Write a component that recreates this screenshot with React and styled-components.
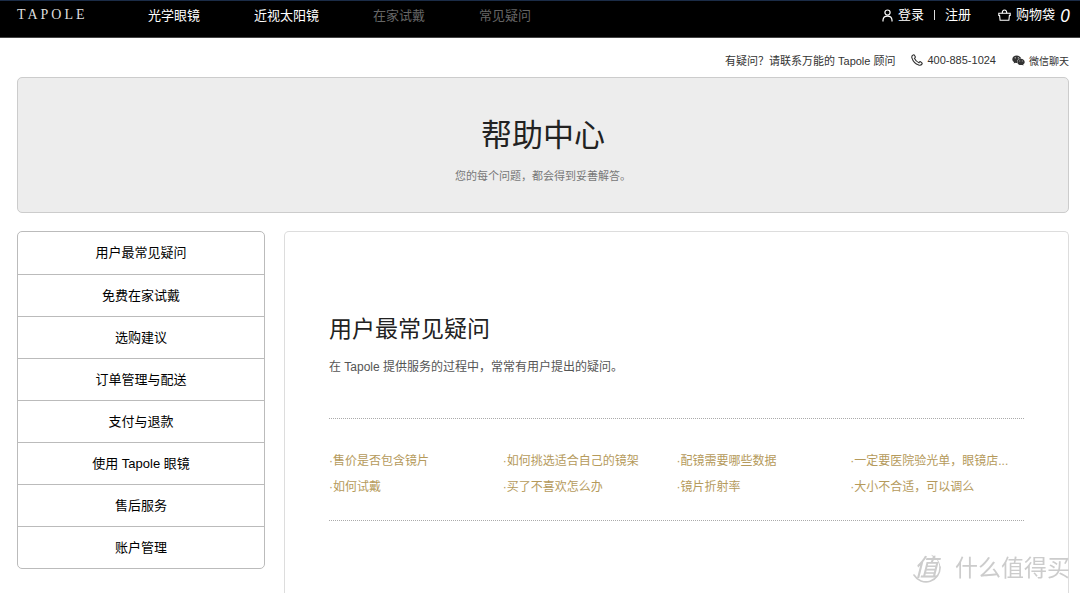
import styled, { createGlobalStyle } from "styled-components";
import { FaWeixin } from "react-icons/fa";

const navItems = [
  { label: "光学眼镜" },
  { label: "近视太阳镜" },
  { label: "在家试戴", dim: true },
  { label: "常见疑问", dim: true },
];

const topics = [
  "用户最常见疑问",
  "免费在家试戴",
  "选购建议",
  "订单管理与配送",
  "支付与退款",
  "使用 Tapole 眼镜",
  "售后服务",
  "账户管理",
];

const questions = [
  "售价是否包含镜片",
  "如何挑选适合自己的镜架",
  "配镜需要哪些数据",
  "一定要医院验光单，眼镜店...",
  "如何试戴",
  "买了不喜欢怎么办",
  "镜片折射率",
  "大小不合适，可以调么",
];

const UserIcon = () => (
  <svg width="11" height="13" viewBox="0 0 11 13" fill="none" stroke="currentColor" strokeWidth="1.2" aria-hidden="true">
    <circle cx="5.5" cy="3.6" r="2.6" />
    <path d="M1 12.600V11C1.200 8.700 3 7.100 5.500 7.100S9.800 8.700 10 11v1.600" />
  </svg>
);

const BagIcon = () => (
  <svg width="13" height="12" viewBox="0 0 13 12" fill="none" stroke="currentColor" strokeWidth="1.1" aria-hidden="true">
    <path d="M.8 4.300h11.400v2.200h-.8l-.5 4.700H2.100l-.5-4.700H.8z" />
    <path d="M4.200 4.300c0-4.400 4.600-4.400 4.600 0" />
  </svg>
);

const PhoneIcon = () => (
  <svg width="12" height="12" viewBox="0 0 12 12" fill="none" stroke="currentColor" strokeWidth="1.1" aria-hidden="true">
    <path d="M2.200.9C.9 1.500.5 2.600.9 3.900c1 3.300 3.800 6.200 6.900 7.200 1.400.4 2.600-.1 3.300-1.200.2-.4.100-.7-.2-1L9.500 7.800c-.4-.3-.8-.2-1 .2l-.5.8C5.900 7.900 4.300 6.300 3.400 4.300l.7-.6c.3-.3.4-.6.2-1L3.400 1.200C3.100.800 2.700.700 2.200.9z" />
  </svg>
);

const StampRing = () => (
  <svg width="30" height="30" viewBox="0 0 30 30" fill="none" stroke="currentColor" strokeLinecap="round" aria-hidden="true">
    <path strokeWidth="1" d="M21 2.500A14 14 0 0 1 29 14" />
    <path strokeWidth="1.600" d="M29 14A14 14 0 0 1 3 22" />
  </svg>
);

const App = () => {
  return (
    <>
      <GlobalStyle />
      <Header>
        <Logo href="#">TAPOLE</Logo>
        <Nav>
          {navItems.map((item) => (
            <NavLink href="#" key={item.label} $dim={item.dim}>
              {item.label}
            </NavLink>
          ))}
        </Nav>
        <Account>
          <AccountLink href="#">
            <UserIcon />
            登录
          </AccountLink>
          <Divider />
          <AccountLink href="#">注册</AccountLink>
          <CartLink href="#">
            <BagIcon />
            购物袋
            <CartCount>0</CartCount>
          </CartLink>
        </Account>
      </Header>
      <Page>
        <Contact>
          <span>有疑问？请联系万能的 Tapole 顾问</span>
          <ContactLink href="tel:400-885-1024">
            <PhoneIcon />
            400-885-1024
          </ContactLink>
          <ContactLink href="#" $small>
            <FaWeixin size={13} />
            微信聊天
          </ContactLink>
        </Contact>
        <Banner>
          <BannerTitle>帮助中心</BannerTitle>
          <BannerText>您的每个问题，都会得到妥善解答。</BannerText>
        </Banner>
        <Columns>
          <Sidebar>
            {topics.map((topic) => (
              <TopicLink href="#" key={topic}>
                {topic}
              </TopicLink>
            ))}
          </Sidebar>
          <Panel>
            <PanelTitle>用户最常见疑问</PanelTitle>
            <PanelText>在 Tapole 提供服务的过程中，常常有用户提出的疑问。</PanelText>
            <Questions>
              {questions.map((question) => (
                <QuestionLink href="#" key={question}>
                  ·{question}
                </QuestionLink>
              ))}
            </Questions>
          </Panel>
        </Columns>
      </Page>
      <Watermark>
        <Stamp>
          <StampRing />
          <StampText>值</StampText>
        </Stamp>
        什么值得买
      </Watermark>
    </>
  );
};

export default App;

const GlobalStyle = createGlobalStyle`
  * {
    box-sizing: border-box;
  }

  html {
    height: 100%;
    overflow: hidden;
  }

  body, #root {
    height: 100%;
    margin: 0;
  }

  #root {
    display: flex;
    flex-direction: column;
  }

  body {
    background: #fff;
    color: #333;
    font-family: "Liberation Sans", "Noto Sans CJK SC", sans-serif;
    font-size: 12px;
  }

  a {
    color: inherit;
    text-decoration: none;
  }

  h1, h2, p {
    margin: 0;
    font-weight: 400;
  }
`;

const Header = styled.header`
  display: flex;
  flex-shrink: 0;
  align-items: flex-start;
  height: 38px;
  padding: 0 10px 0 17px;
  background: #000;
  color: #fff;
  border-top: 1px solid #1b2c47;
  border-bottom: 1px solid #444;
`;

const Logo = styled.a`
  width: 131px;
  padding-top: 4px;
  font-family: "Liberation Serif", serif;
  font-size: 14px;
  line-height: 20px;
  letter-spacing: 3px;
  color: #ddd;
`;

const Nav = styled.nav`
  display: flex;
  gap: 54px;
  padding-top: 5px;
`;

const NavLink = styled.a`
  font-size: 13px;
  line-height: 20px;
  color: ${(props) => (props.$dim ? "#666" : "#fff")};
`;

const Account = styled.div`
  display: flex;
  align-items: center;
  gap: 10px;
  height: 28px;
  margin-left: auto;
`;

const AccountLink = styled.a`
  display: flex;
  align-items: center;
  gap: 5px;
  font-size: 13px;
  line-height: 20px;
`;

const CartLink = styled(AccountLink)`
  margin-left: 17px;
`;

const CartCount = styled.span`
  font-family: "Open Sans", sans-serif;
  font-size: 18px;
  font-style: italic;
`;

const Divider = styled.span`
  width: 1px;
  height: 10px;
  background: #ddd;
`;

const Page = styled.main`
  display: flex;
  flex: 1;
  flex-direction: column;
  min-height: 0;
  padding: 0 11px 0 17px;
`;

const Contact = styled.div`
  display: flex;
  justify-content: flex-end;
  align-items: center;
  gap: 16px;
  height: 39px;
  padding-top: 5px;
  font-size: 11px;
`;

const ContactLink = styled.a`
  display: flex;
  align-items: center;
  gap: 4px;
  font-size: ${(props) => (props.$small ? "10px" : "11px")};
`;

const Banner = styled.section`
  padding: 37px 20px 26px;
  background: #ededed;
  border: 1px solid #ccc;
  border-radius: 5px;
  text-align: center;
`;

const BannerTitle = styled.h1`
  font-size: 31px;
  line-height: 42px;
  color: #222;
`;

const BannerText = styled.p`
  margin-top: 9px;
  font-size: 11px;
  line-height: 20px;
  color: #777;
`;

const Columns = styled.div`
  display: flex;
  flex: 1;
  align-items: flex-start;
  gap: 19px;
  min-height: 0;
  padding-top: 18px;
`;

const Sidebar = styled.nav`
  display: grid;
  grid-auto-rows: 1fr;
  width: 248px;
  min-height: 338px;
  border: 1px solid #bbb;
  border-radius: 5px;
`;

const TopicLink = styled.a`
  display: flex;
  align-items: center;
  justify-content: center;
  padding-bottom: 3px;
  font-size: 13px;
  color: #000;

  & + & {
    border-top: 1px solid #bbb;
  }
`;

const Panel = styled.section`
  flex: 1;
  align-self: stretch;
  min-width: 0;
  padding: 80px 44px 0;
  border: 1px solid #ddd;
  border-bottom: none;
  border-radius: 5px 5px 0 0;
`;

const PanelTitle = styled.h2`
  font-size: 23px;
  line-height: 34px;
  color: #222;
`;

const PanelText = styled.p`
  margin-top: 11px;
  line-height: 20px;
  color: #555;
`;

const Questions = styled.div`
  display: grid;
  grid-template-columns: repeat(4, 1fr);
  row-gap: 6px;
  margin-top: 41px;
  padding: 32px 0 23px;
  border-top: 1px dotted #aaa;
  border-bottom: 1px dotted #aaa;
`;

const QuestionLink = styled.a`
  overflow: hidden;
  line-height: 20px;
  white-space: nowrap;
  color: #b59a5b;
`;

const Watermark = styled.div`
  position: fixed;
  right: 10px;
  bottom: 8px;
  display: flex;
  align-items: center;
  gap: 14px;
  font-size: 23px;
  line-height: 34px;
  color: #ccc;
`;

const Stamp = styled.span`
  display: grid;
  place-items: center;

  & > * {
    grid-area: 1 / 1;
  }
`;

const StampText = styled.span`
  font-size: 24px;
  font-style: italic;
  font-weight: 500;
`;
